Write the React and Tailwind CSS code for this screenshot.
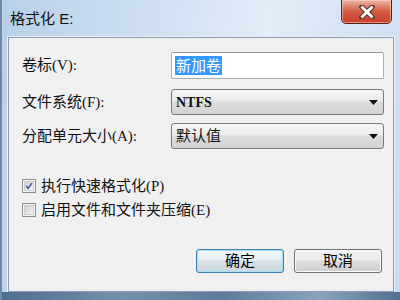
import React from 'react';

const cjk = "font-['Liberation_Sans','Noto_Sans_CJK_SC',sans-serif]";
const mixed = "font-['Liberation_Serif','Noto_Sans_CJK_SC',serif]";

const CloseButton = () => (
  <div className="mt-[-1px] mr-[8px] w-[51px] h-[25px] rounded-b-[5px] border border-[#5a2018] bg-gradient-to-b from-[#eab4a6] via-[#d35a43] to-[#c8402a] flex items-center justify-center shadow-[inset_0_0_0_1px_rgba(255,220,210,0.5)]">
    <svg width="16" height="14" viewBox="0 0 16 14">
      <path d="M3 2 L13 12 M13 2 L3 12" stroke="#5b2b24" strokeWidth="5" strokeLinecap="square" />
      <path d="M3.5 2.5 L12.5 11.5 M12.5 2.5 L3.5 11.5" stroke="#ffffff" strokeWidth="3" strokeLinecap="square" />
    </svg>
  </div>
);

const Arrow = () => (
  <svg width="9" height="5" viewBox="0 0 9 5" className="mr-[5px]">
    <path d="M0 0 L9 0 L4.5 5 Z" fill="#111" />
  </svg>
);

const Combo = ({ children, className }) => (
  <div className={`w-[213px] h-[26px] rounded-[3px] border border-[#7a7a7a] flex items-center justify-between pl-[4px] bg-[linear-gradient(to_bottom,#f4f4f4_0%,#ececec_45%,#dddddd_50%,#d2d2d2_100%)] ${className}`}>
    {children}
    <Arrow />
  </div>
);

const Checkbox = ({ checked }) => (
  <div className="w-[14px] h-[14px] border border-[#8e8f8f] bg-[#f4f4f4] flex items-center justify-center">
    <div className="w-[10px] h-[10px] border border-[#d0d0d0] bg-gradient-to-br from-[#cbcfd5] to-[#f6f6f6] flex items-center justify-center">
      {checked && (
        <svg width="10" height="10" viewBox="0 0 10 10">
          <path d="M1.5 5 L4 8 L8.5 1.5" stroke="#3a4f8f" strokeWidth="1.8" fill="none" />
        </svg>
      )}
    </div>
  </div>
);

const Button = ({ children, focused }) => (
  <div
    className={`w-[88px] h-[24px] rounded-[3px] border flex items-center justify-center text-[15px] text-black ${cjk} ${
      focused
        ? 'border-[#3c7fb1] bg-[linear-gradient(to_bottom,#f1f6fa_0%,#e6eef5_45%,#d9e2ea_50%,#ccd7e1_100%)] shadow-[inset_0_0_0_1px_#a9dcf5]'
        : 'border-[#707070] bg-[linear-gradient(to_bottom,#f2f2f2_0%,#ebebeb_45%,#dddddd_50%,#cfcfcf_100%)] shadow-[inset_0_0_0_1px_#fcfcfc]'
    }`}
  >
    {children}
  </div>
);

export default function App() {
  return (
    <div className="w-[400px] h-[300px] overflow-hidden flex flex-col bg-[linear-gradient(100deg,#b9d0e8_0%,#cfe0f2_35%,#e2edf8_60%,#c8dcef_100%)] border-l-2 border-[#6f8aa6]">
      <div className="h-[37px] flex items-start justify-between">
        <div className={`pl-[8px] pt-[9px] text-[15px] leading-[20px] text-[#111] ${cjk}`}>格式化 E:</div>
        <CloseButton />
      </div>
      <div className="ml-[6px] mr-[6px] h-[255px] border border-[#8a9bb0] bg-[#f0f0f0] shadow-[0_0_0_1px_#e9f1f9] flex flex-col pl-[13px] pr-[9px] pt-[14px]">
        <div className="flex items-center justify-between">
          <div className={`text-[15px] text-[#111] ${mixed}`}>卷标(V):</div>
          <div className="w-[213px] h-[27px] border border-[#abadb3] border-t-[#8f949b] bg-white rounded-[2px] flex items-center pl-[3px]">
            <span className={`bg-[#3399ff] text-white text-[15px] leading-[19px] px-[1px] ${cjk}`}>新加卷</span>
          </div>
        </div>
        <div className="flex items-center justify-between mt-[10px]">
          <div className={`text-[15px] text-[#111] ${mixed}`}>文件系统(F):</div>
          <Combo>
            <span className="font-['Liberation_Serif',serif] font-bold text-[14px] text-[#111]">NTFS</span>
          </Combo>
        </div>
        <div className="flex items-center justify-between mt-[8px]">
          <div className={`text-[15px] text-[#111] ${mixed}`}>分配单元大小(A):</div>
          <Combo>
            <span className={`text-[15px] text-[#111] ${cjk}`}>默认值</span>
          </Combo>
        </div>
        <div className="flex items-center gap-[5px] mt-[27px] h-[20px]">
          <Checkbox checked />
          <span className={`text-[15px] leading-[20px] text-[#111] ${mixed}`}>执行快速格式化(P)</span>
        </div>
        <div className="flex items-center gap-[5px] mt-[4px] h-[20px]">
          <Checkbox />
          <span className={`text-[15px] leading-[20px] text-[#111] ${mixed}`}>启用文件和文件夹压缩(E)</span>
        </div>
        <div className="flex justify-end gap-[10px] mt-[29px] pr-[2px]">
          <Button focused>确定</Button>
          <Button>取消</Button>
        </div>
      </div>
      <div className="flex-1 bg-[linear-gradient(90deg,#4f6d8e_0%,#7390ad_30%,#5e7b9b_55%,#8aa4bd_80%,#536f8f_100%)]" />
    </div>
  );
}
